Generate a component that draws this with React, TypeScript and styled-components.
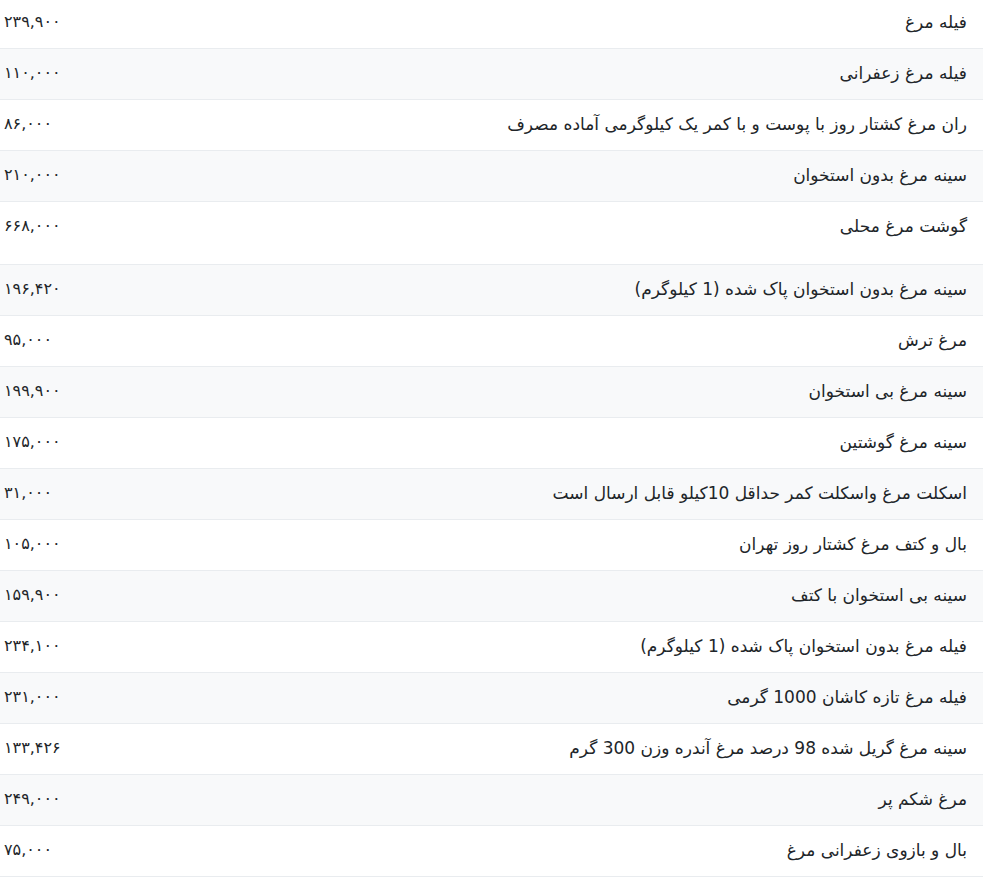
import React from 'react';
import styled, { createGlobalStyle } from 'styled-components';

const GlobalStyle = createGlobalStyle`
  html, body {
    margin: 0;
    padding: 0;
    background: #ffffff;
  }
  body {
    font-family: "Vazir", "DejaVu Sans", sans-serif;
    color: #212529;
  }
`;

interface PriceItem {
  name: string;
  price: string;
  tall?: boolean;
}

const items: PriceItem[] = [
  { name: 'فیله مرغ', price: '۲۳۹,۹۰۰' },
  { name: 'فیله مرغ زعفرانی', price: '۱۱۰,۰۰۰' },
  { name: 'ران مرغ کشتار روز با پوست و با کمر یک کیلوگرمی آماده مصرف', price: '۸۶,۰۰۰' },
  { name: 'سینه مرغ بدون استخوان', price: '۲۱۰,۰۰۰' },
  { name: 'گوشت مرغ محلی', price: '۶۶۸,۰۰۰', tall: true },
  { name: 'سینه مرغ بدون استخوان پاک شده (1 کیلوگرم)', price: '۱۹۶,۴۲۰' },
  { name: 'مرغ ترش', price: '۹۵,۰۰۰' },
  { name: 'سینه مرغ بی استخوان', price: '۱۹۹,۹۰۰' },
  { name: 'سینه مرغ گوشتین', price: '۱۷۵,۰۰۰' },
  { name: 'اسکلت مرغ واسکلت کمر حداقل 10کیلو قابل ارسال است', price: '۳۱,۰۰۰' },
  { name: 'بال و کتف مرغ کشتار روز تهران', price: '۱۰۵,۰۰۰' },
  { name: 'سینه بی استخوان با کتف', price: '۱۵۹,۹۰۰' },
  { name: 'فیله مرغ بدون استخوان پاک شده (1 کیلوگرم)', price: '۲۳۴,۱۰۰' },
  { name: 'فیله مرغ تازه کاشان 1000 گرمی', price: '۲۳۱,۰۰۰' },
  { name: 'سینه مرغ گریل شده 98 درصد مرغ آندره وزن 300 گرم', price: '۱۳۳,۴۲۶' },
  { name: 'مرغ شکم پر', price: '۲۴۹,۰۰۰' },
  { name: 'بال و بازوی زعفرانی مرغ', price: '۷۵,۰۰۰' },
];

const Page = styled.div`
  width: 983px;
  margin-top: -2px;
`;

const Table = styled.table`
  width: 100%;
  border-collapse: collapse;
  direction: rtl;
`;

const Row = styled.tr<{ $striped: boolean }>`
  background: ${p => (p.$striped ? '#f8f9fa' : '#ffffff')};
  border-bottom: 1px solid #e9ecef;
`;

const NameCell = styled.td<{ $tall?: boolean }>`
  padding: 11px 16px ${p => (p.$tall ? '25px' : '13px')} 16px;
  height: 26px;
  font-size: 17px;
  line-height: 26px;
  text-align: right;
  color: #212529;
  white-space: nowrap;
`;

const PriceCell = styled.td<{ $tall?: boolean }>`
  padding: 11px 4px ${p => (p.$tall ? '25px' : '13px')} 4px;
  width: 120px;
  font-size: 16px;
  line-height: 26px;
  text-align: left;
  color: #212529;
  white-space: nowrap;
`;

const Price = styled.span`
  direction: ltr;
  unicode-bidi: isolate;
`;

const App: React.FC = () => (
  <>
    <GlobalStyle />
    <Page>
      <Table>
        <tbody>
          {items.map((item, i) => (
            <Row key={i} $striped={i % 2 === 1}>
              <NameCell $tall={item.tall}>{item.name}</NameCell>
              <PriceCell $tall={item.tall}>
                <Price>{item.price}</Price>
              </PriceCell>
            </Row>
          ))}
        </tbody>
      </Table>
    </Page>
  </>
);

export default App;
